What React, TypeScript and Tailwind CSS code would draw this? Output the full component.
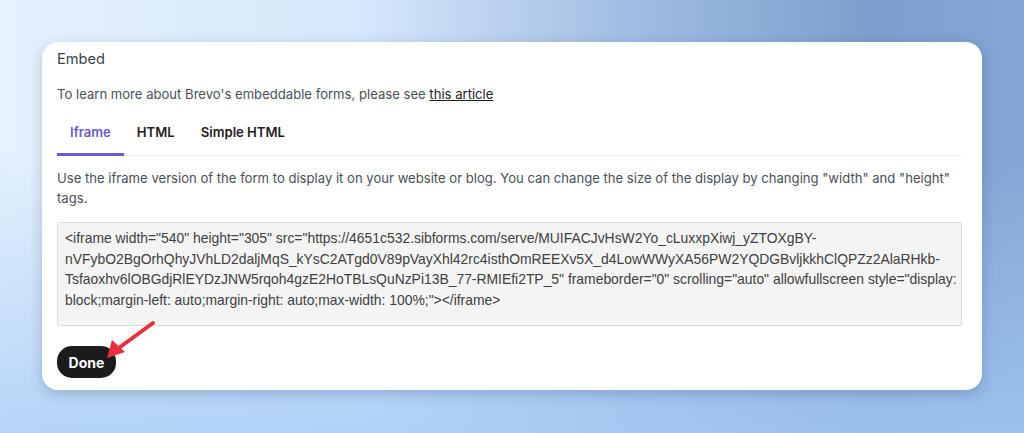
import React, { useState } from 'react';

const tabs = ['Iframe', 'HTML', 'Simple HTML'];

const codeLines = [
  '<iframe width="540" height="305" src="https://4651c532.sibforms.com/serve/MUIFACJvHsW2Yo_cLuxxpXiwj_yZTOXgBY-',
  'nVFybO2BgOrhQhyJVhLD2daljMqS_kYsC2ATgd0V89pVayXhl42rc4isthOmREEXv5X_d4LowWWyXA56PW2YQDGBvljkkhClQPZz2AlaRHkb-',
  'Tsfaoxhv6lOBGdjRlEYDzJNW5rqoh4gzE2HoTBLsQuNzPi13B_77-RMIEfi2TP_5" frameborder="0" scrolling="auto" allowfullscreen style="display:',
  'block;margin-left: auto;margin-right: auto;max-width: 100%;"></iframe>',
];

export default function App() {
  const [active, setActive] = useState('Iframe');

  return (
    <div className="relative w-[1024px] h-[433px] overflow-hidden font-['Inter',sans-serif] bg-[linear-gradient(to_bottom,rgba(255,255,255,0)_35%,rgba(165,203,246,0.75)_100%),linear-gradient(to_right,#e5f1fd_0%,#d6e8fb_35%,#9fbce2_62%,#7d9fcd_85%,#84a6d4_100%)] pt-[42px] pl-[42px]">
      <div className="w-[940px] h-[348px] bg-white rounded-[16px] shadow-[0_4px_14px_rgba(40,60,100,0.25)] pl-[15px] pr-[20px] pt-[7px] flex flex-col">
        <h1 className="text-[14.6px] leading-[20px] text-[#3a3f47]">Embed</h1>

        <p className="mt-[15px] text-[13.1px] leading-[20px] text-[#4b5058]">
          To learn more about Brevo's embeddable forms, please see{' '}
          <a href="#" className="underline text-[#1f2329]">this article</a>
        </p>

        <div className="mt-[5px] flex border-b border-[#f0f0f2]">
          {tabs.map(t => (
            <button
              key={t}
              onClick={() => setActive(t)}
              className={`px-[13px] pt-[13px] pb-[11px] text-[13.1px] leading-[20px] font-semibold border-b-[3px] -mb-px ${
                active === t ? 'text-[#6a5ad8] border-[#6a5ad8]' : 'text-[#1f2023] border-transparent'
              }`}
            >
              {t}
            </button>
          ))}
        </div>

        <p className="mt-[12px] text-[13.1px] leading-[20px] text-[#4b5058]">
          Use the iframe version of the form to display it on your website or blog. You can change the size of the display by changing "width" and "height"
          tags.
        </p>

        <div className="mt-[14px] h-[104px] bg-[#f4f4f4] border border-[#dcdcdc] rounded-[2px] pl-[7px] pr-[6px] pt-[5px] font-['Liberation_Sans',Arial,sans-serif] text-[13.9px] leading-[20.7px] text-[#404040]">
          {codeLines.map((l, i) => (
            <div key={i} className="whitespace-nowrap">{l}</div>
          ))}
        </div>

        <div className="mt-[20px]">
          <button className="h-[32px] w-[59px] rounded-[15px] bg-[#1b1b1b] text-white text-[14px] font-bold">
            Done
          </button>
        </div>
      </div>

      <svg className="absolute left-0 top-0 pointer-events-none" width="1024" height="433" viewBox="0 0 1024 433">
        <line x1="153" y1="323" x2="116" y2="350" stroke="#ea2f3c" strokeWidth="4" strokeLinecap="round" />
        <polygon points="107,358 112,340 125,352" fill="#ea2f3c" />
      </svg>
    </div>
  );
}
